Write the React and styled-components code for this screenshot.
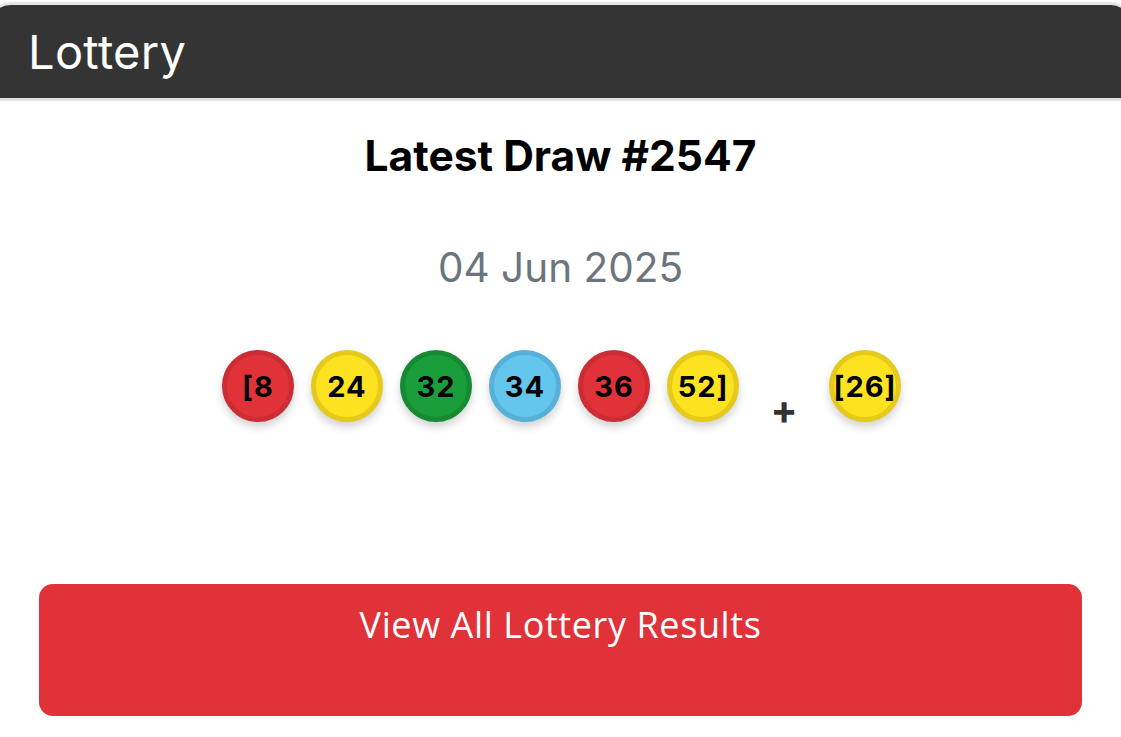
import React from "react";
import styled, { createGlobalStyle } from "styled-components";

const GlobalStyle = createGlobalStyle`
  body {
    margin: 0;
    background: #ffffff;
    font-family: Inter, "Noto Sans", sans-serif;
    overflow: hidden;
  }
`;

const BALL_COLORS = {
  red: { bg: "#e1323a", ring: "#cc2c33" },
  yellow: { bg: "#fde31f", ring: "#e5c91b" },
  green: { bg: "#1a9e3b", ring: "#168a32" },
  blue: { bg: "#64c5ed", ring: "#57b0d8" },
};

const draw = {
  number: 2547,
  date: "04 Jun 2025",
  main: [
    { label: "[8", color: "red" },
    { label: "24", color: "yellow" },
    { label: "32", color: "green" },
    { label: "34", color: "blue" },
    { label: "36", color: "red" },
    { label: "52]", color: "yellow" },
  ],
  bonus: { label: "[26]", color: "yellow" },
};

const App = () => {
  return (
    <>
      <GlobalStyle />
      <Page>
        <Card>
          <Header>Lottery</Header>
          <Body>
            <Title>Latest Draw #{draw.number}</Title>
            <DrawDate>{draw.date}</DrawDate>
            <Balls>
              {draw.main.map((ball, i) => (
                <Ball key={i} $color={ball.color}>
                  {ball.label}
                </Ball>
              ))}
              <Plus>+</Plus>
              <Ball $color={draw.bonus.color}>{draw.bonus.label}</Ball>
            </Balls>
            <ResultsButton>View All Lottery Results</ResultsButton>
          </Body>
        </Card>
      </Page>
    </>
  );
};

const Page = styled.div`
  padding-top: 2px;
`;

const Card = styled.div`
  margin: 0 -6px;
  border-top: 3px solid #e6e6e6;
  border-radius: 16px 16px 0 0;
  overflow: hidden;
  background: #ffffff;
`;

const Header = styled.div`
  height: 96px;
  box-sizing: border-box;
  padding: 0 0 0 34px;
  display: flex;
  align-items: center;
  background: #343434;
  border-bottom: 3px solid #e2e2e2;
  color: #ffffff;
  font-size: 47px;
  font-weight: 400;
  letter-spacing: 0.3px;
`;

const Body = styled.div`
  display: flex;
  flex-direction: column;
  align-items: center;
  padding: 30px 45px 20px;
`;

const Title = styled.h2`
  margin: 0;
  font-size: 42.5px;
  font-weight: 700;
  color: #000000;
  line-height: 50px;
`;

const DrawDate = styled.div`
  margin-top: 62px;
  font-size: 40.5px;
  color: #6c757d;
  line-height: 50px;
`;

const Balls = styled.div`
  margin-top: 49px;
  display: flex;
  align-items: center;
  gap: 17px;
  margin-left: 2px;
`;

const Ball = styled.div`
  width: 72px;
  height: 72px;
  box-sizing: border-box;
  border-radius: 50%;
  border: 5px solid ${(p) => BALL_COLORS[p.$color].ring};
  background: ${(p) => BALL_COLORS[p.$color].bg};
  box-shadow: 0 5px 9px rgba(0, 0, 0, 0.18);
  display: flex;
  align-items: center;
  justify-content: center;
  font-size: 29px;
  font-weight: 700;
  color: #000000;
  letter-spacing: 1px;
`;

const Plus = styled.div`
  width: 56px;
  text-align: center;
  margin: 48px 0 0;
  font-size: 40px;
  font-weight: 700;
  color: #333333;
  line-height: 1;
`;

const ResultsButton = styled.button`
  margin-top: 154px;
  width: 100%;
  height: 132px;
  border: none;
  border-radius: 14px;
  background: #e03238;
  color: #ffffff;
  font-family: "Open Sans", sans-serif;
  font-size: 36px;
  font-weight: 400;
  letter-spacing: 0.6px;
  display: flex;
  justify-content: center;
  align-items: flex-start;
  padding-top: 16px;
`;

export default App;
